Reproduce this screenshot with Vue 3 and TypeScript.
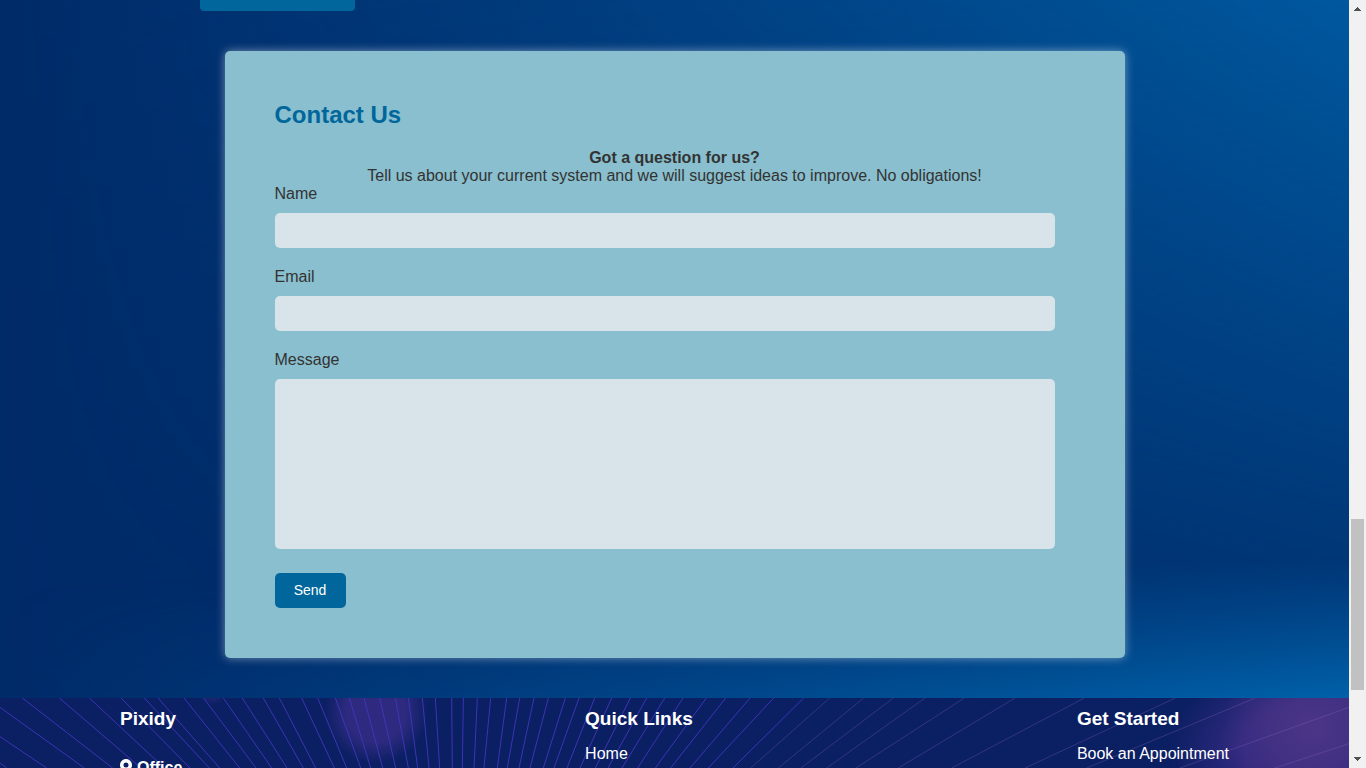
<script setup lang="ts">
import { ref } from 'vue'

interface Ray {
  x1: number
  y1: number
  x2: number
  y2: number
}

const name = ref('')
const email = ref('')
const message = ref('')

const H = 210
const full = (pairs: number[][]): Ray[] =>
  pairs.map(([top, bottom]) => ({ x1: top, y1: 0, x2: bottom, y2: H }))

const brightRays: Ray[] = [
  { x1: 0, y1: 195, x2: 20, y2: H },
  { x1: 0, y1: 116, x2: 140, y2: H },
  { x1: 0, y1: 28, x2: 253, y2: H },
  ...full([
    [67, 338], [178, 423], [268, 493], [363, 570], [433, 628], [474, 659],
    [552, 719], [611, 768], [670, 815], [727, 861], [790, 910], [838, 947],
    [905, 1003], [953, 1040], [1006, 1082], [1048, 1112], [1092, 1148],
    [1139, 1187], [1186, 1225], [1225, 1253], [1267, 1287], [1306, 1319],
    [1355, 1357], [1390, 1387], [1432, 1422], [1472, 1452], [1520, 1492],
    [1559, 1522], [1602, 1557], [1645, 1590], [1696, 1630], [1737, 1662],
    [1784, 1701], [1835, 1740], [1891, 1786], [1940, 1824], [1994, 1866],
    [2049, 1913], [2119, 1966], [2177, 2012], [2250, 2070], [2321, 2125],
    [2411, 2199],
  ]),
]

const faintRays: Ray[] = [
  ...full([
    [2489, 2252], [2591, 2335], [2680, 2403], [2775, 2480], [2893, 2568],
    [3045, 2695], [3253, 2855], [3526, 3075], [3766, 3260],
  ]),
  { x1: 4047, y1: 28, x2: 3540, y2: H },
  { x1: 4047, y1: 137, x2: 3825, y2: H },
]
</script>

<template>
  <div class="window">
    <div class="page">
      <main class="main">
        <a class="cta" href="#contact" aria-label="Contact"></a>
        <section id="contact" class="card">
          <h2>Contact Us</h2>
          <p class="intro">
            <strong>Got a question for us?</strong><br />
            Tell us about your current system and we will suggest ideas to improve. No obligations!
          </p>
          <form @submit.prevent>
            <label for="name">Name</label>
            <input id="name" v-model="name" type="text" />
            <label for="email">Email</label>
            <input id="email" v-model="email" type="email" />
            <label for="message">Message</label>
            <textarea id="message" v-model="message"></textarea>
            <button type="submit">Send</button>
          </form>
        </section>
      </main>

      <footer class="footer">
        <svg class="rays" viewBox="0 0 4047 210" preserveAspectRatio="none" aria-hidden="true">
          <line v-for="(r, i) in brightRays" :key="'b' + i" v-bind="r" class="ray" />
          <line v-for="(r, i) in faintRays" :key="'f' + i" v-bind="r" class="ray faint" />
        </svg>
        <div class="col first">
          <h3>Pixidy</h3>
          <div class="office">
            <svg viewBox="0 0 384 512" aria-hidden="true">
              <path
                d="M172 502C27 291 0 270 0 192 0 86 86 0 192 0s192 86 192 192c0 78-27 99-172 310-10 13-30 13-40 0zM192 272a80 80 0 1 0 0-160 80 80 0 0 0 0 160z"
              />
            </svg>
            <strong>Office</strong>
          </div>
        </div>
        <nav class="col" aria-label="Quick Links">
          <h3>Quick Links</h3>
          <a href="#home">Home</a>
        </nav>
        <nav class="col" aria-label="Get Started">
          <h3>Get Started</h3>
          <a href="#book">Book an Appointment</a>
        </nav>
      </footer>
    </div>

    <div class="scrollbar" aria-hidden="true">
      <svg viewBox="0 0 17 17"><path d="M8 7h1v1h1v1h1v1h1v1H5v-1h1V9h1V8h1z" /></svg>
      <div class="track"><div class="thumb"></div></div>
      <svg viewBox="0 0 17 17"><path d="M5 6h7v1h-1v1h-1v1H9v1H8V9H7V8H6V7H5z" /></svg>
    </div>
  </div>
</template>

<style>
body {
  margin: 0;
}
</style>

<style scoped>
.window {
  display: grid;
  grid-template-columns: 1fr 17px;
  height: 100vh;
  overflow: hidden;
  font-family: "Liberation Sans", Arial, sans-serif;
  font-size: 16px;
  line-height: 18px;
  color: #333;
}

.page {
  display: flex;
  flex-direction: column;
  min-width: 0;
  min-height: 0;
  overflow: hidden;
}

.main {
  position: relative;
  isolation: isolate;
  flex: none;
  padding-bottom: 40px;
  background: #002b69;
}

.main::before,
.main::after {
  content: "";
  position: absolute;
  inset: 0;
  z-index: -1;
}

.main::before {
  background: linear-gradient(to right, transparent, #00589e);
  mask-image: linear-gradient(184deg, #000, rgba(0, 0, 0, 0.15) 82%);
}

.main::after {
  top: auto;
  height: 170px;
  background: linear-gradient(to right, transparent, #0061a9);
  mask-image: linear-gradient(359deg, #000, transparent 140px);
}

.cta {
  display: block;
  width: 155px;
  height: 11px;
  margin-left: 200px;
  border-radius: 0 0 4px 4px;
  background: #00669b;
}

.card {
  box-sizing: border-box;
  max-width: 900px;
  margin: 40px auto 0;
  padding: 50px;
  border-radius: 5px;
  background: #89bfce;
  box-shadow: 0 0 10px rgba(255, 255, 255, 0.45);
}

h2 {
  margin: 0 0 21px;
  font-size: 24px;
  line-height: 27px;
  color: #00669b;
}

.intro {
  margin: 0;
  text-align: center;
}

form {
  display: flex;
  flex-direction: column;
  align-items: flex-start;
}

label {
  margin-bottom: 10px;
}

input,
textarea {
  box-sizing: border-box;
  width: calc(100% - 20px);
  height: 35px;
  margin: 0 0 20px;
  padding: 10px;
  border: 0;
  border-radius: 5px;
  background: #d9e4ea;
  font: inherit;
  color: inherit;
}

textarea {
  height: 170px;
  margin-bottom: 24px;
  resize: none;
}

button {
  width: 71px;
  height: 35px;
  padding: 0 0 2px;
  border: 0;
  border-radius: 5px;
  background: #00669b;
  font-family: inherit;
  font-size: 14px;
  color: #fff;
}

.footer {
  position: relative;
  display: flex;
  flex: 1 0 auto;
  justify-content: space-between;
  height: 70px;
  padding: 0 120px;
  color: #fff;
  background:
    radial-gradient(circle at 376px 14px, #2f2a80 0, #2d2a7f 30px, transparent 52px),
    radial-gradient(circle at 213px -6px, #2f2a80 0, transparent 13px),
    radial-gradient(ellipse 90px 80px at calc(100% - 36px) 30px, rgba(80, 55, 135, 0.85), rgba(80, 55, 135, 0.5) 50%, transparent),
    radial-gradient(ellipse 150px 95px at calc(100% - 30px) 50px, #332a80 50%, transparent),
    #0b1f63;
}

.rays {
  position: absolute;
  inset: 0;
  width: 100%;
  height: 70px;
}

.ray {
  stroke: #4236bd;
  stroke-width: 1px;
  stroke-opacity: 0.9;
  vector-effect: non-scaling-stroke;
}

.faint {
  stroke: #8d6bc0;
  stroke-opacity: 0.3;
}

.col {
  position: relative;
  height: 70px;
}

.first {
  min-width: 81px;
}

h3 {
  margin: 0;
  padding: 10px 0 16px;
  font-size: 19px;
  line-height: 21px;
}

.col a {
  color: inherit;
  text-decoration: none;
}

.office {
  display: flex;
  gap: 5px;
  padding-top: 14px;
}

.office svg {
  width: 12px;
  height: 16px;
  fill: #fff;
}

.scrollbar {
  display: flex;
  flex-direction: column;
  background: #f1f1f1;
}

.scrollbar svg {
  flex: none;
  width: 17px;
  height: 17px;
  fill: #505050;
}

.track {
  display: flex;
  flex: 1;
  flex-direction: column;
  align-items: center;
}

.track::before {
  content: "";
  flex: 502;
}

.track::after {
  content: "";
  flex: 61;
}

.thumb {
  flex: 171;
  width: 13px;
  background: #c1c1c1;
}
</style>
